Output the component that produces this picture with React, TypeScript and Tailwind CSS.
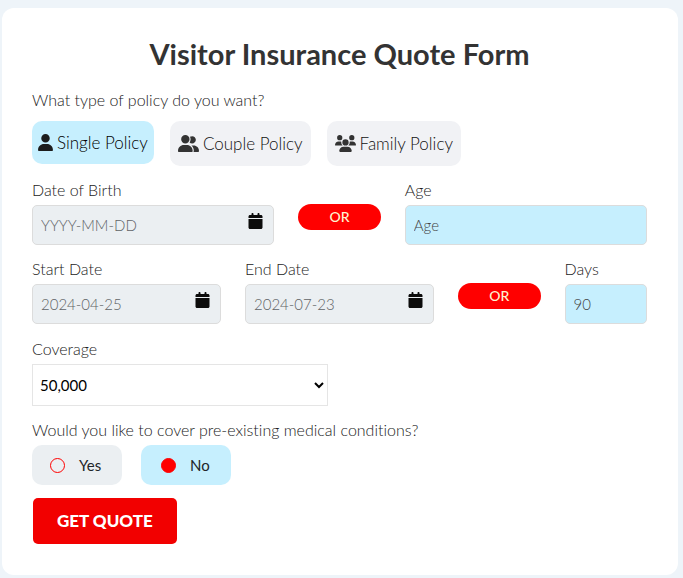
import { useState } from "react"
import type { ReactNode } from "react"
import { FaCalendar, FaUser, FaUserGroup, FaUsers } from "react-icons/fa6"

const POLICIES = [
  { id: "single", label: "Single Policy", icon: <FaUser className="h-[17px] w-[15px] text-[#1c1c1c]" /> },
  { id: "couple", label: "Couple Policy", icon: <FaUserGroup className="h-[17px] w-[21px] text-[#333333]" /> },
  { id: "family", label: "Family Policy", icon: <FaUsers className="h-[17px] w-[21px] text-[#333333]" /> },
]

const inputClass = "block h-10 w-full rounded-[5px] border border-[#dcdcdc] px-2 text-[15px] outline-none"

function Field({ id, label, className, children }: { id: string; label: string; className: string; children: ReactNode }) {
  return (
    <div className={className}>
      <label htmlFor={id} className="block leading-[18px] pb-[6px]">
        {label}
      </label>
      {children}
    </div>
  )
}

function DateInput({ id, placeholder }: { id: string; placeholder: string }) {
  return (
    <div className="relative">
      <input id={id} type="text" placeholder={placeholder} className={inputClass + " bg-[#ebeff2] placeholder:text-[#606366]"} />
      <FaCalendar className="pointer-events-none absolute right-[11px] top-2 h-4 w-[15px] text-[#0c0c0c]" aria-hidden />
    </div>
  )
}

function OrPill() {
  return (
    <div className="col-span-2 pt-[23px]">
      <div className="flex h-[26px] items-center justify-center rounded-full bg-[#ff0000] text-sm font-medium text-[#fff3d0]">OR</div>
    </div>
  )
}

export default function App() {
  const [policy, setPolicy] = useState("single")
  const [preExisting, setPreExisting] = useState("no")

  return (
    <main className="min-h-screen bg-[#eef4f9] pt-2 pr-[5px] pb-[3px] pl-0.5 font-['Lato',sans-serif] text-base font-light text-[#222222] [font-variant-ligatures:none]">
      <form className="rounded-xl bg-white pt-7 pr-[31px] pb-[31px] pl-[30px]" onSubmit={(e) => e.preventDefault()}>
        <h1 className="text-center text-[29px] leading-9 font-bold text-[#333333]">Visitor Insurance Quote Form</h1>

        <p className="mt-[18px] leading-5">What type of policy do you want?</p>
        <div className="mt-[11px] flex items-start gap-4">
          {POLICIES.map((p) => (
            <button
              key={p.id}
              type="button"
              aria-pressed={policy === p.id}
              onClick={() => setPolicy(p.id)}
              className={
                "flex items-center gap-1 rounded-[10px] text-[17px] " +
                (policy === p.id ? "h-[43px] bg-[#c6effe] px-[6px] text-black" : "h-[45px] bg-[#f1f2f5] px-2 text-[#111111]")
              }
            >
              {p.icon}
              {p.label}
            </button>
          ))}
        </div>

        {/* Birth date or age */}
        <div className="mt-[15px] grid grid-cols-12 gap-x-6">
          <Field id="dob" label="Date of Birth" className="col-span-5">
            <DateInput id="dob" placeholder="YYYY-MM-DD" />
          </Field>
          <OrPill />
          <Field id="age" label="Age" className="col-span-5">
            <input id="age" type="text" placeholder="Age" className={inputClass + " bg-[#c6effe] placeholder:text-[#444444]"} />
          </Field>
        </div>

        {/* Trip dates or number of days */}
        <div className="mt-[15px] grid grid-cols-12 gap-x-6">
          <Field id="start" label="Start Date" className="col-span-4">
            <DateInput id="start" placeholder="2024-04-25" />
          </Field>
          <Field id="end" label="End Date" className="col-span-4">
            <DateInput id="end" placeholder="2024-07-23" />
          </Field>
          <OrPill />
          <Field id="days" label="Days" className="col-span-2">
            <input id="days" type="text" placeholder="90" className={inputClass + " bg-[#c6effe] placeholder:text-[#444444]"} />
          </Field>
        </div>

        <div className="mt-4 grid grid-cols-12 gap-x-6">
          <Field id="coverage" label="Coverage" className="col-span-6">
            <select id="coverage" className="block h-[42px] w-full border border-[#e5e5e5] bg-white px-[3px] text-[15px] font-normal text-black">
              <option>50,000</option>
              <option>100,000</option>
              <option>150,000</option>
            </select>
          </Field>
        </div>

        <fieldset className="mt-[15px]">
          <legend className="leading-[18px]">Would you like to cover pre-existing medical conditions?</legend>
          <div className="mt-[6px] flex gap-[19px]">
            {["Yes", "No"].map((option) => (
              <label
                key={option}
                className="flex h-10 w-[90px] items-center gap-[14px] rounded-[10px] bg-[#ebeff2] pl-[18px] text-[15px] font-normal text-[#212529] has-checked:bg-[#c6effe] has-checked:pl-5"
              >
                <input
                  type="radio"
                  name="preExisting"
                  value={option.toLowerCase()}
                  checked={preExisting === option.toLowerCase()}
                  onChange={(e) => setPreExisting(e.target.value)}
                  className="size-[15px] appearance-none rounded-full border border-[#ff0000] checked:bg-[#ff0000]"
                />
                {option}
              </label>
            ))}
          </div>
        </fieldset>

        <button type="submit" className="mt-[13px] ml-px h-[46px] rounded-[5px] bg-[#f20000] px-6 text-[17px] font-black text-white">
          GET QUOTE
        </button>
      </form>
    </main>
  )
}
